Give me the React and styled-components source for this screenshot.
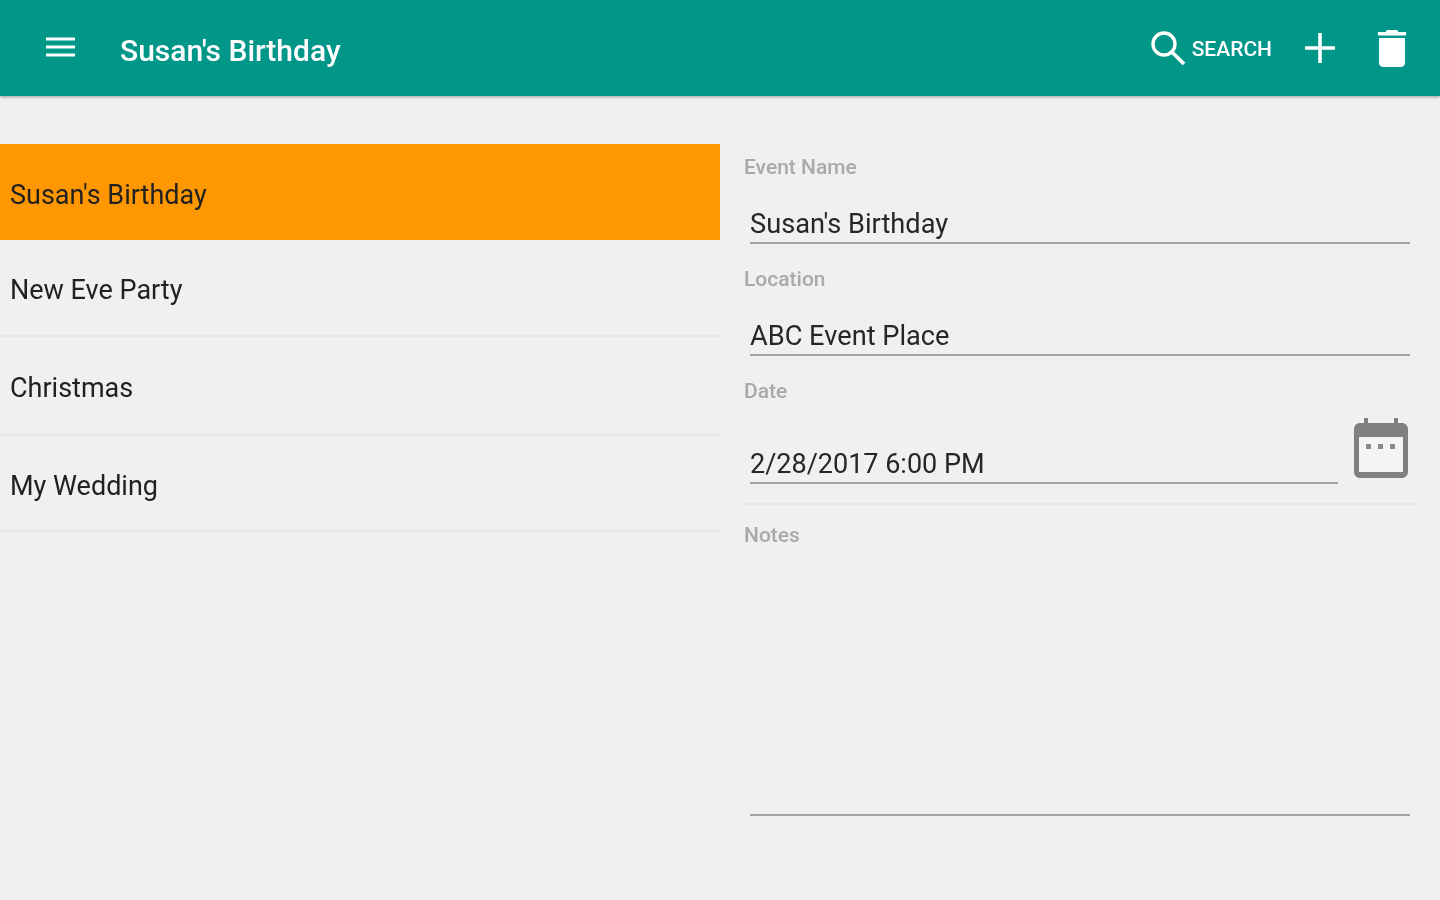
import styled, { createGlobalStyle } from "styled-components"

const events = [
    { name: "Susan's Birthday", height: 96, selected: true },
    { name: "New Eve Party", height: 97 },
    { name: "Christmas", height: 99 },
    { name: "My Wedding", height: 96 },
]

export default function App() {
    return (
        <Page>
            <GlobalStyle />
            <Toolbar>
                <MenuButton aria-label="Menu">
                    <svg width="29" height="20" viewBox="0 0 29 20">
                        <path d="M0 2H29M0 10H29M0 18H29" stroke="#fff" strokeWidth="3" fill="none" />
                    </svg>
                </MenuButton>
                <Title>Susan's Birthday</Title>
                <Actions>
                    <SearchButton>
                        <svg width="36" height="36" viewBox="0 0 36 36">
                            <circle cx="14" cy="14" r="11" stroke="#fff" strokeWidth="3.4" fill="none" />
                            <path d="M22 22L34 34" stroke="#fff" strokeWidth="3.8" fill="none" />
                        </svg>
                        <SearchLabel>SEARCH</SearchLabel>
                    </SearchButton>
                    <PlusButton aria-label="Add">
                        <svg width="30" height="30" viewBox="0 0 30 30">
                            <path d="M15 0V30M0 15H30" stroke="#fff" strokeWidth="3.6" fill="none" />
                        </svg>
                    </PlusButton>
                    <TrashButton aria-label="Delete">
                        <svg width="30" height="38" viewBox="0 0 30 38">
                            <path d="M10 1H20L21.5 3H29V6.5H1V3H8.5Z" fill="#fff" />
                            <path d="M2 9H28V34C28 36.2 26.2 38 24 38H6C3.8 38 2 36.2 2 34Z" fill="#fff" />
                        </svg>
                    </TrashButton>
                </Actions>
            </Toolbar>
            <Content>
                <EventList>
                    {events.map((event) => (
                        <EventRow key={event.name} $height={event.height} $selected={event.selected}>
                            {event.name}
                        </EventRow>
                    ))}
                </EventList>
                <Details>
                    <FieldLabel>Event Name</FieldLabel>
                    <FieldValue>Susan's Birthday</FieldValue>
                    <FieldLabel $top={24}>Location</FieldLabel>
                    <FieldValue>ABC Event Place</FieldValue>
                    <FieldLabel $top={24}>Date</FieldLabel>
                    <DateRow>
                        <DateValue>2/28/2017 6:00 PM</DateValue>
                        <CalendarIcon width="54" height="60" viewBox="0 0 54 60">
                            <path d="M10 0H14V5H40V0H44V5H48C51.3 5 54 7.7 54 11V54C54 57.3 51.3 60 48 60H6C2.7 60 0 57.3 0 54V11C0 7.7 2.7 5 6 5H10Z" fill="#808080" />
                            <rect x="5" y="19" width="44" height="35" fill="#f4f4f4" />
                            <rect x="12" y="26" width="5" height="5" fill="#8a8a8a" />
                            <rect x="24" y="26" width="5" height="5" fill="#8a8a8a" />
                            <rect x="36" y="26" width="5" height="5" fill="#8a8a8a" />
                        </CalendarIcon>
                    </DateRow>
                    <FieldLabel $top={18}>Notes</FieldLabel>
                    <NotesArea />
                </Details>
            </Content>
        </Page>
    )
}

const GlobalStyle = createGlobalStyle`
    html, body {
        margin: 0;
        padding: 0;
        background: #f0f0f0;
    }
`

const Page = styled.div`
    width: 1440px;
    height: 900px;
    overflow: hidden;
    background: #f0f0f0;
    font-family: Roboto, "Liberation Sans", sans-serif;
    filter: blur(0.7px);
`

const Toolbar = styled.header`
    display: flex;
    align-items: center;
    height: 96px;
    background: #009688;
    box-shadow: 0 1px 3px rgba(0, 0, 0, 0.35);
`

const IconButton = styled.div`
    display: flex;
    align-items: center;
`

const MenuButton = styled(IconButton)`
    margin: 0 0 2px 46px;
`

const Title = styled.h1`
    margin: 4px 0 0 45px;
    font-size: 30px;
    font-weight: 500;
    color: #fff;
`

const Actions = styled.div`
    display: flex;
    align-items: center;
    margin-left: auto;
    padding-right: 33px;
`

const SearchButton = styled(IconButton)`
    gap: 6px;
`

const SearchLabel = styled.span`
    padding-top: 2px;
    font-size: 21px;
    font-weight: 500;
    color: #fff;
`

const PlusButton = styled(IconButton)`
    margin-left: 33px;
`

const TrashButton = styled(IconButton)`
    margin-left: 42px;
`

const Content = styled.main`
    display: flex;
    padding-top: 48px;
`

const EventList = styled.ul`
    width: 720px;
    margin: 0;
    padding: 0;
    list-style: none;
`

const EventRow = styled.li`
    display: flex;
    align-items: center;
    box-sizing: border-box;
    height: ${(p) => p.$height}px;
    padding: 5px 0 0 10px;
    font-size: 27px;
    color: #212121;
    background: ${(p) => (p.$selected ? "#ff9800" : "transparent")};
    border-bottom: ${(p) => (p.$selected ? "none" : "2px solid #e8e8e8")};
`

const Details = styled.section`
    display: flex;
    flex-direction: column;
    width: 672px;
    margin-left: 24px;
    padding-top: 11px;
`

const FieldLabel = styled.label`
    margin-top: ${(p) => p.$top || 0}px;
    height: 24px;
    line-height: 25px;
    font-size: 21px;
    font-weight: 500;
    color: #a9a9a9;
`

const FieldValue = styled.div`
    box-sizing: border-box;
    height: 65px;
    margin: 0 6px -1px 6px;
    padding-top: 25px;
    line-height: 40px;
    font-size: 27.2px;
    color: #262626;
    border-bottom: 2px solid #a3a3a3;
`

const DateRow = styled.div`
    display: flex;
    align-items: flex-end;
    justify-content: space-between;
    box-sizing: border-box;
    height: 102px;
    padding: 0 8px 19px 6px;
    border-bottom: 2px solid #e8e8e8;
`

const DateValue = styled.div`
    flex: 0 0 588px;
    box-sizing: border-box;
    height: 42px;
    line-height: 44px;
    font-size: 27px;
    color: #262626;
    border-bottom: 2px solid #a3a3a3;
`

const CalendarIcon = styled.svg`
    margin-bottom: 6px;
`

const NotesArea = styled.div`
    box-sizing: border-box;
    height: 269px;
    margin: 0 6px;
    border-bottom: 2px solid #a3a3a3;
`
